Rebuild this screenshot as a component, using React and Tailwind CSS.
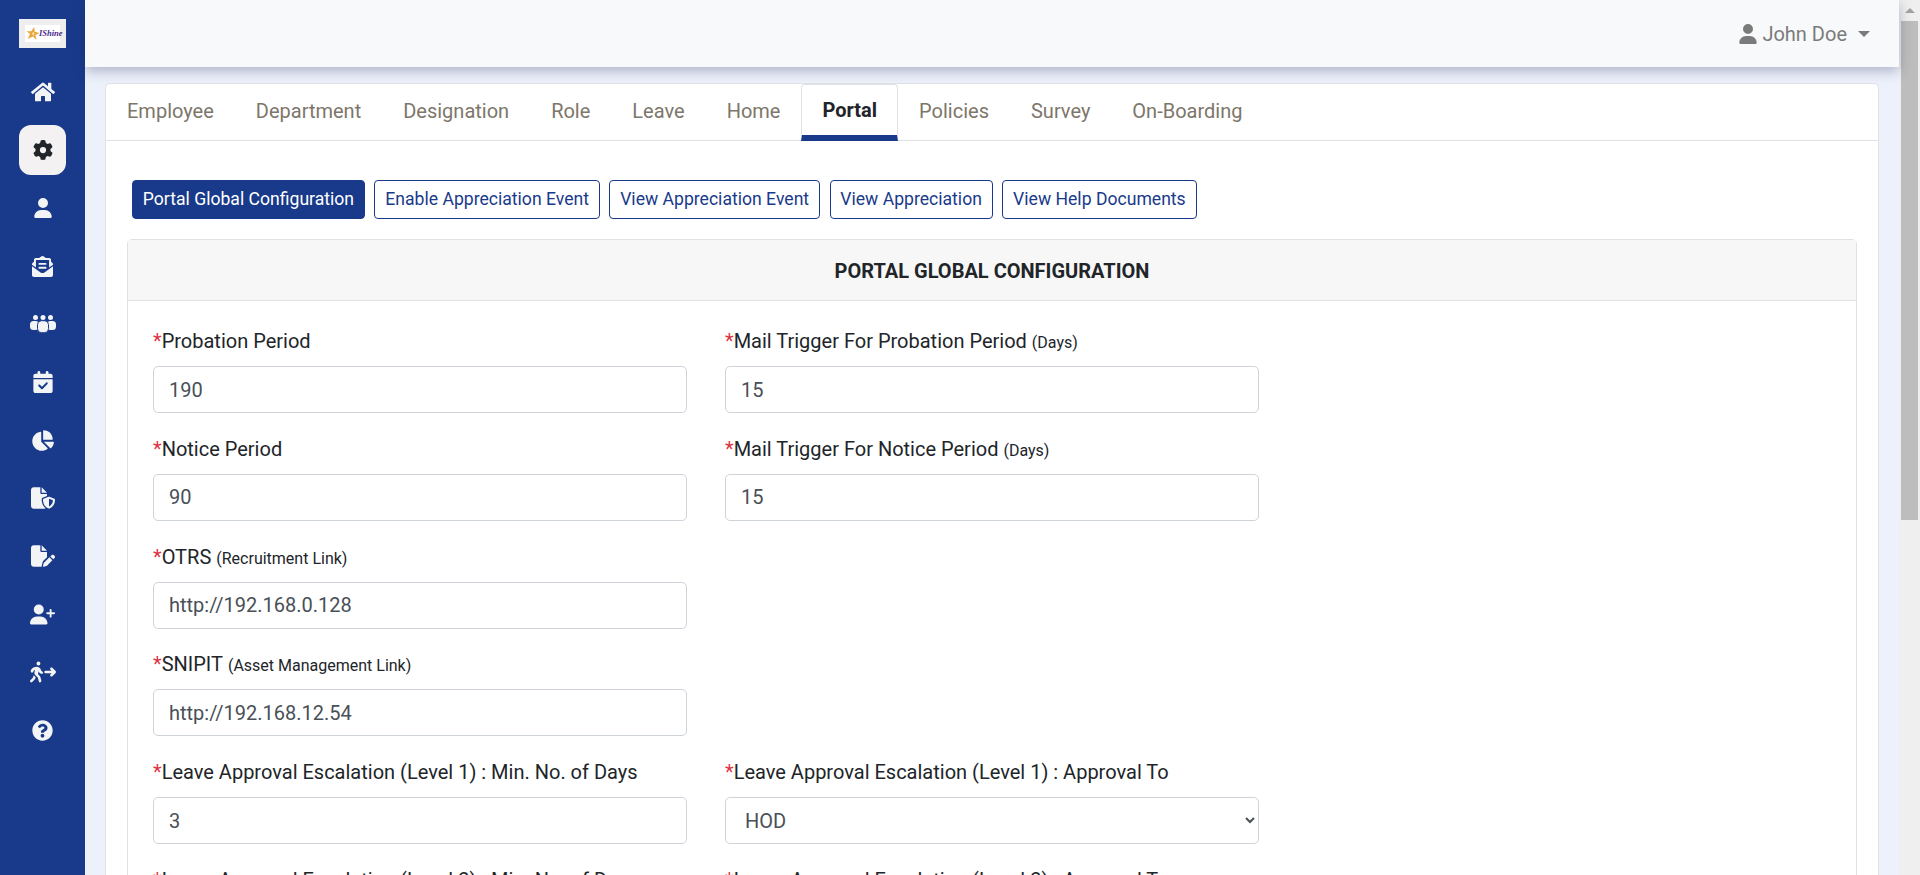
import { FaHome, FaEnvelopeOpenText, FaQuestionCircle } from 'react-icons/fa';
import {
  FaGear,
  FaUser,
  FaUserPlus,
  FaCalendarCheck,
  FaChartPie,
  FaFileShield,
  FaFilePen,
  FaPersonWalkingArrowRight,
} from 'react-icons/fa6';

// three people, the middle one in front
function TeamIcon() {
  return (
    <svg width="26" height="18" viewBox="0 0 26 18">
      <circle cx="5.5" cy="2.5" r="2.5" fill="currentColor" />
      <circle cx="13" cy="2.5" r="2.5" fill="currentColor" />
      <circle cx="20.5" cy="2.5" r="2.5" fill="currentColor" />
      <rect x="0" y="6" width="9" height="9" rx="3.5" fill="currentColor" />
      <rect x="17" y="6" width="9" height="9" rx="3.5" fill="currentColor" />
      <rect x="7.5" y="5.7" width="11" height="12" rx="4" fill="currentColor" stroke="#193a8a" strokeWidth="1" />
    </svg>
  );
}

const navIcons = [
  { Icon: FaHome, size: 24 },
  { Icon: FaGear, size: 20, active: true },
  { Icon: FaUser, size: 20 },
  { Icon: FaEnvelopeOpenText, size: 21 },
  { Icon: TeamIcon },
  { Icon: FaCalendarCheck, size: 22 },
  { Icon: FaChartPie, size: 23 },
  { Icon: FaFileShield, size: 24 },
  { Icon: FaFilePen, size: 24 },
  { Icon: FaUserPlus, size: 25 },
  { Icon: FaPersonWalkingArrowRight, size: 26 },
  { Icon: FaQuestionCircle, size: 21 },
];

const tabs = ['Employee', 'Department', 'Designation', 'Role', 'Leave', 'Home', 'Portal', 'Policies', 'Survey', 'On-Boarding'];

const subTabs = ['Portal Global Configuration', 'Enable Appreciation Event', 'View Appreciation Event', 'View Appreciation', 'View Help Documents'];

const rows = [
  [
    { label: 'Probation Period', value: '190' },
    { label: 'Mail Trigger For Probation Period', hint: '(Days)', value: '15' },
  ],
  [
    { label: 'Notice Period', value: '90' },
    { label: 'Mail Trigger For Notice Period', hint: '(Days)', value: '15' },
  ],
  [{ label: 'OTRS', hint: '(Recruitment Link)', value: 'http://192.168.0.128' }],
  [{ label: 'SNIPIT', hint: '(Asset Management Link)', value: 'http://192.168.12.54' }],
  [
    { label: 'Leave Approval Escalation (Level 1) : Min. No. of Days', value: '3' },
    { label: 'Leave Approval Escalation (Level 1) : Approval To', value: 'HOD', select: true },
  ],
  [
    { label: 'Leave Approval Escalation (Level 2) : Min. No. of Days', value: '5' },
    { label: 'Leave Approval Escalation (Level 2) : Approval To', value: 'HR', select: true },
  ],
];

function Field({ field }) {
  return (
    <div className="w-[534px]">
      <div className="h-[30px] mb-[10px] text-[20px] leading-[30px] text-[#212529] whitespace-nowrap">
        <span className="text-[#dc3545]">*</span>
        {field.label}
        {field.hint && <span className="text-[16px] ml-[5px]">{field.hint}</span>}
      </div>
      {field.select ? (
        <select
          defaultValue={field.value}
          className="block w-full h-[47px] rounded-[5px] border border-[#ced4da] bg-white px-[15px] text-[20px] text-[#495057]"
        >
          <option>HOD</option>
          <option>HR</option>
        </select>
      ) : (
        <input
          type="text"
          defaultValue={field.value}
          className="block w-full h-[47px] rounded-[5px] border border-[#ced4da] bg-white px-[15px] text-[20px] text-[#495057]"
        />
      )}
    </div>
  );
}

function Logo() {
  return (
    <div className="w-[47px] h-[29px] bg-[#eeeeee] flex items-center justify-center">
      <div className="w-[35px] h-[17px] bg-white flex items-center pl-[1px]">
        <svg width="14" height="15" viewBox="0 0 24 24" className="shrink-0">
          <path d="M14 1l1 8 8 2-7 4 2 8-6-6-9 4 4-8-6-5 8 0z" fill="#e8a53a" />
          <path d="M12 9l3 3-2 4-3-3z" fill="#f6dfa8" />
        </svg>
        <span className="font-['Liberation_Serif',serif] text-[8.5px] leading-none italic font-bold text-[#4a2a8a] -ml-[1px]">IShine</span>
      </div>
    </div>
  );
}

export default function App() {
  return (
    <div className="flex h-[875px] overflow-hidden bg-[#edf1fb] font-['Roboto',sans-serif]">
      <aside className="w-[85px] shrink-0 bg-[#193a8a] flex flex-col items-center pt-[19px]">
        <Logo />
        <div className="mt-[15px] flex flex-col items-center">
          {navIcons.map(({ Icon, size, active }, i) => (
            <div key={i} className="h-[58px] w-[47px] flex items-center justify-center">
              <div className={active ? 'w-[47px] h-[50px] rounded-[12px] bg-[#f3f1f2] flex items-center justify-center text-[#212529]' : 'text-[#f3f4f6]'}>
                <Icon size={size} />
              </div>
            </div>
          ))}
        </div>
      </aside>

      <main className="flex-1 min-w-0">
        <header className="h-[67px] bg-[#f8f9fa] shadow-[0_4px_12px_rgba(25,40,90,0.3)] flex items-center justify-end pr-[29px] text-[#7b7b7b] relative">
          <FaUser size={20} />
          <span className="ml-[4px] text-[20px]">John Doe</span>
          <div className="ml-[11px] w-0 h-0 border-x-[6px] border-x-transparent border-t-[6px] border-t-[#7b7b7b]" />
        </header>

        <section className="mt-[16px] ml-[20px] mr-[20px] rounded-[5px] border border-[#e0e2e6] bg-white">
          <nav className="h-[57px] flex border-b border-[#dee2e6]">
            {tabs.map((tab) => (
              <div
                key={tab}
                className={
                  tab === 'Portal'
                    ? 'h-[57px] px-[20px] flex items-center text-[20px] font-bold text-[#212529] bg-white border border-[#dee2e6] border-b-[6px] border-b-[#193a8a] rounded-t-[4px]'
                    : 'h-[56px] px-[21px] pb-[3px] flex items-center text-[20px] text-[#7d766a]'
                }
              >
                {tab}
              </div>
            ))}
          </nav>

          <div className="px-[21px] pt-[39px]">
            <div className="flex gap-[9.6px] pl-[5px]">
              {subTabs.map((label, i) => (
                <div
                  key={label}
                  className={
                    i === 0
                      ? 'h-[39px] px-[9.8px] flex items-center rounded-[4px] border border-[#193a8a] bg-[#193a8a] text-white text-[17.6px]'
                      : 'h-[39px] px-[9.8px] flex items-center rounded-[4px] border border-[#193a8a] bg-white text-[#193a8a] text-[17.6px]'
                  }
                >
                  {label}
                </div>
              ))}
            </div>

            <div className="mt-[20px] rounded-[5px] border border-[#e0e2e6]">
              <div className="h-[61px] pt-[1px] flex items-center justify-center bg-[#f7f7f7] border-b border-[#e0e2e6] text-[20px] font-bold text-[#212529]">
                PORTAL GLOBAL CONFIGURATION
              </div>
              <div className="px-[25px] pt-[25px] flex flex-col gap-[20.75px]">
                {rows.map((row, i) => (
                  <div key={i} className="flex gap-[38px]">
                    {row.map((field) => (
                      <Field key={field.label} field={field} />
                    ))}
                  </div>
                ))}
              </div>
            </div>
          </div>
        </section>
      </main>

      <div className="w-[21px] shrink-0 bg-[#efefef] flex flex-col items-center">
        <div className="h-[21px] flex items-center justify-center">
          <div className="w-0 h-0 border-x-[5px] border-x-transparent border-b-[5px] border-b-[#a3a3a3]" />
        </div>
        <div className="w-[17px] h-[499px] bg-[#bdbdbd]" />
      </div>
    </div>
  );
}
